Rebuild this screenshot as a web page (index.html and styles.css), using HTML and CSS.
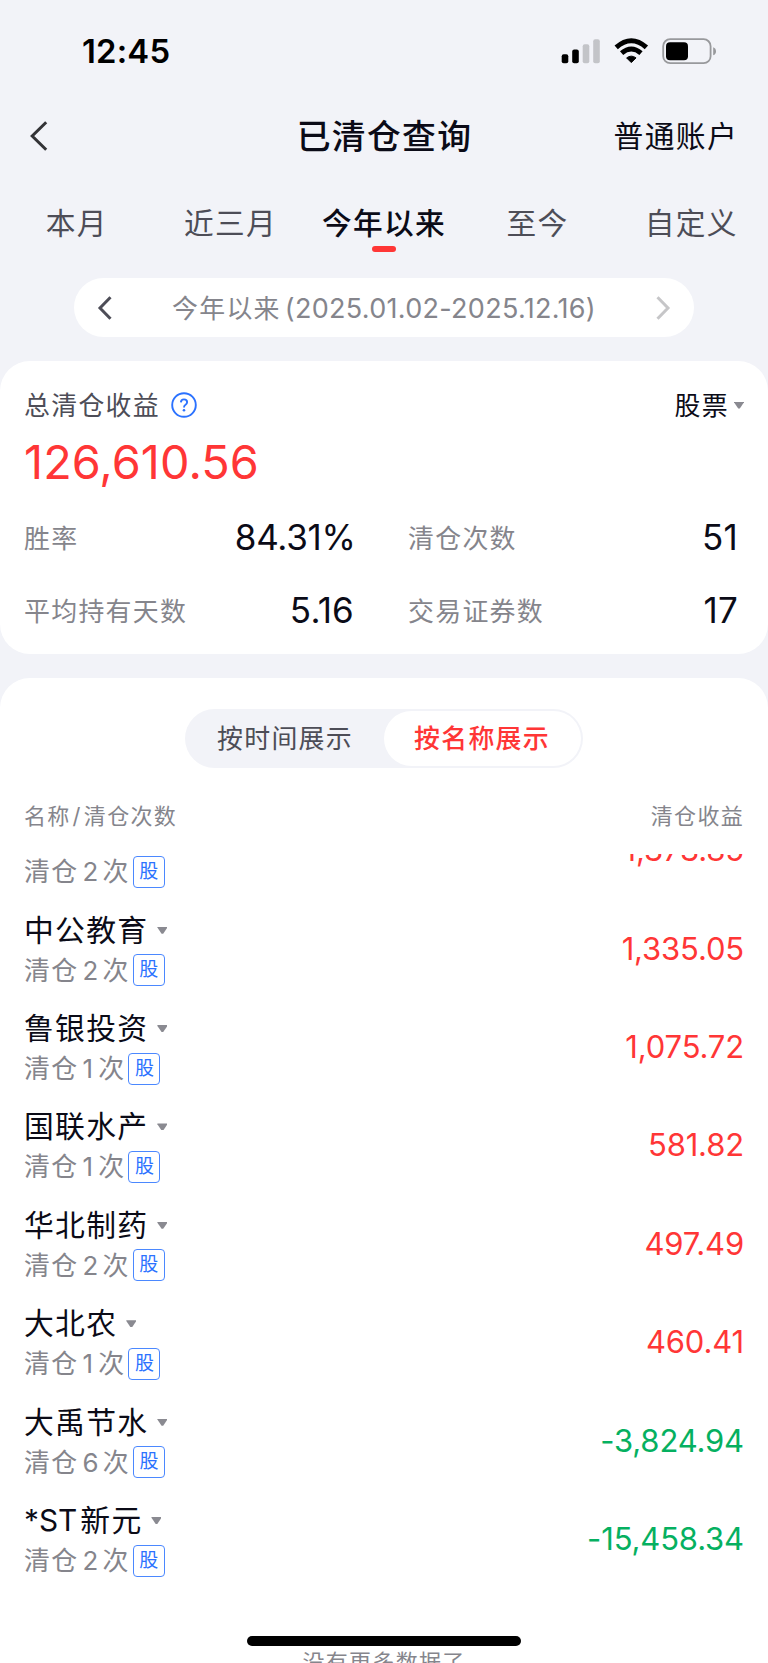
FILE: index.html
```html
<!DOCTYPE html>
<html lang="zh-CN">
<head>
<meta charset="utf-8">
<title>已清仓查询</title>
<link rel="stylesheet" href="styles.css">
</head>
<body>
<div class="screen">
  <header class="status">
    <span class="clock">12:45</span>
    <svg class="status-icons" width="156" height="28" viewBox="0 0 156 28">
      <rect x="1.7" y="16.2" width="6.6" height="9" rx="2"/>
      <rect x="12.2" y="11.4" width="6.6" height="13.8" rx="2"/>
      <rect class="dim" x="22.7" y="6.2" width="6.6" height="19" rx="2"/>
      <rect class="dim" x="33.2" y="1.2" width="6.6" height="24" rx="2"/>
      <path d="M71.3 24.6 L66.6 19.9 Q71.3 16.4 76 19.9 Z" stroke="#000" stroke-width="1" stroke-linejoin="round"/>
      <path class="wave" d="M61.6 15.1 Q71.3 6.9 81 15.1"/>
      <path class="wave" d="M56.2 9.4 Q71.3 -3.9 86.4 9.4"/>
      <rect class="shell" x="103.2" y="1.2" width="47.4" height="24" rx="7"/>
      <rect x="106" y="4.2" width="22" height="18" rx="4"/>
      <path class="nub" d="M153.2 9.2 Q156 10.2 156 13.2 Q156 16.2 153.2 17.2 Z"/>
    </svg>
  </header>

  <nav class="navbar">
    <svg class="back" width="20" height="32" viewBox="0 0 20 32"><path d="M17.2 2.2 L3.2 16 L17.2 29.8"/></svg>
    <h1 class="title">已清仓查询</h1>
    <span class="account">普通账户</span>
  </nav>

  <div class="tabs">
    <span class="tab">本月</span>
    <span class="tab">近三月</span>
    <span class="tab active">今年以来</span>
    <span class="tab">至今</span>
    <span class="tab">自定义</span>
  </div>

  <div class="range">
    <svg class="prev" width="16" height="26" viewBox="0 0 16 26"><path d="M13.5 2.2 L3 13 L13.5 23.8"/></svg>
    <span class="range-text">今年以来<span class="dates">(2025.01.02-2025.12.16)</span></span>
    <svg class="next" width="16" height="26" viewBox="0 0 16 26"><path d="M2.5 2.2 L13 13 L2.5 23.8"/></svg>
  </div>

  <section class="summary">
    <div class="summary-head">
      <span class="label-dark">总清仓收益</span>
      <svg class="help" width="26" height="26" viewBox="0 0 26 26"><circle cx="13" cy="13" r="11.8"/><path d="M9.9 10.4 Q10 7.4 13 7.4 Q16.1 7.4 16.1 10.2 Q16.1 11.6 14.5 12.7 Q13 13.6 13 15.4"/><circle class="dot" cx="13" cy="18.2" r="1.3"/></svg>
      <span class="kind">股票</span><i class="caret"></i>
    </div>
    <div class="total">126,610.56</div>
    <div class="metrics">
      <div class="metric"><span class="label">胜率</span><b class="num percent">84.31%</b></div>
      <div class="metric"><span class="label">清仓次数</span><b class="num">51</b></div>
      <div class="metric"><span class="label">平均持有天数</span><b class="num">5.16</b></div>
      <div class="metric"><span class="label">交易证券数</span><b class="num">17</b></div>
    </div>
  </section>

  <section class="detail">
    <div class="segment">
      <span class="seg">按时间展示</span>
      <span class="seg on">按名称展示</span>
    </div>
    <div class="cols"><span>名称<span class="slash">/</span>清仓次数</span><span>清仓收益</span></div>
    <div class="viewport">
      <div class="list">
        <div class="row"><div class="info"><div class="name"></div><div class="sub">清仓<span class="n">2</span>次<span class="badge">股</span></div></div><span class="amount">1,373.85</span></div>
        <div class="row"><div class="info"><div class="name">中公教育<i class="caret"></i></div><div class="sub">清仓<span class="n">2</span>次<span class="badge">股</span></div></div><span class="amount">1,335.05</span></div>
        <div class="row"><div class="info"><div class="name">鲁银投资<i class="caret"></i></div><div class="sub">清仓<span class="n one">1</span>次<span class="badge">股</span></div></div><span class="amount">1,075.72</span></div>
        <div class="row"><div class="info"><div class="name">国联水产<i class="caret"></i></div><div class="sub">清仓<span class="n one">1</span>次<span class="badge">股</span></div></div><span class="amount">581.82</span></div>
        <div class="row"><div class="info"><div class="name">华北制药<i class="caret"></i></div><div class="sub">清仓<span class="n">2</span>次<span class="badge">股</span></div></div><span class="amount">497.49</span></div>
        <div class="row"><div class="info"><div class="name">大北农<i class="caret"></i></div><div class="sub">清仓<span class="n one">1</span>次<span class="badge">股</span></div></div><span class="amount">460.41</span></div>
        <div class="row"><div class="info"><div class="name">大禹节水<i class="caret"></i></div><div class="sub">清仓<span class="n">6</span>次<span class="badge">股</span></div></div><span class="amount down">-3,824.94</span></div>
        <div class="row"><div class="info"><div class="name"><span class="latin">*ST</span>新元<i class="caret"></i></div><div class="sub">清仓<span class="n">2</span>次<span class="badge">股</span></div></div><span class="amount down">-15,458.34</span></div>
      </div>
      <div class="end">没有更多数据了</div>
    </div>
  </section>
  <div class="home-bar"></div>
</div>
</body>
</html>
```
FILE: styles.css
```css
* { box-sizing: border-box; }
body { margin: 0; }
.screen {
  position: relative;
  width: 768px;
  height: 1663px;
  overflow: hidden;
  display: flex;
  flex-direction: column;
  background: #f2f3f8;
  color: #0b0b17;
  font-family: Inter, "Noto Sans CJK SC", sans-serif;
  font-size: 25.9px;
  letter-spacing: 1.3px;
  white-space: nowrap;
}
svg { display: block; flex: none; }

.status {
  height: 102px;
  padding: 0 52px 0 82px;
  display: flex;
  align-items: center;
  justify-content: space-between;
}
.clock { font-size: 32.8px; font-weight: 600; letter-spacing: 0.2px; color: #000; }
.status-icons { margin-top: 1px; }
.status-icons .dim { fill: #c3c4c8; }
.status-icons .wave { fill: none; stroke: #000; stroke-width: 5; }
.status-icons .shell { fill: none; stroke: #98999c; stroke-width: 1.8; }
.status-icons .nub { fill: #98999c; }

.navbar {
  height: 68px;
  padding: 0 30px 0 29px;
  display: grid;
  grid-template-columns: 1fr auto 1fr;
  align-items: center;
}
.back path, .prev path, .next path { fill: none; stroke: #333336; stroke-width: 3; }
.prev path { stroke: #4d4d57; }
.next path { stroke: #c6c6c8; }
.title { margin: 0 -1px 0 1px; padding-bottom: 4px; font-size: 33.8px; font-weight: 500; }
.account { justify-self: end; padding-bottom: 4px; font-size: 29.8px; }

.tabs {
  height: 108px;
  display: grid;
  grid-template-columns: repeat(5, 1fr);
  color: #4d4d57;
  font-size: 29.7px;
  line-height: 106px;
  text-align: center;
}
.active { color: #0b0b17; font-weight: 500; display: flex; flex-direction: column; align-items: center; }
.active::after { content: ""; width: 24px; height: 6px; margin-top: -30px; border-radius: 3px; background: #ff3636; }

.range {
  width: 620px;
  height: 59px;
  margin: 0 74px 24px;
  padding: 0 23px;
  display: flex;
  align-items: center;
  justify-content: space-between;
  border-radius: 30px;
  background: #fff;
  color: #85858c;
}
.range-text { padding-bottom: 2px; }
.dates { margin-left: 4px; font-size: 27px; letter-spacing: 0.3px; }

.summary {
  height: 293px;
  padding: 24px 24px 0;
  border-radius: 30px;
  background: #fff;
}
.summary-head { height: 40px; display: flex; align-items: center; color: #0b0b17; }
.label-dark, .kind { padding-bottom: 3px; }
.label-dark { color: #4d4d57; }
.help { margin-left: 11px; }
.help circle, .help path { fill: none; stroke: #2b72ff; stroke-width: 1.9; }
.help .dot { fill: #2b72ff; stroke: none; }
.kind { margin-left: auto; }
.caret { display: inline-block; width: 10px; height: 7px; background: #8a8a91; clip-path: polygon(0 0, 100% 0, 100% 12%, 58% 100%, 42% 100%, 0 12%); }
.kind + .caret { margin: 0 0 0 5px; }
.total { height: 60px; margin-top: 7px; line-height: 60px; font-size: 46.8px; letter-spacing: 0.1px; color: #ff3636; }
.metrics { margin-top: 9px; display: grid; grid-template-columns: 330px 330px; column-gap: 54px; }
.metric { height: 72.7px; display: flex; align-items: center; justify-content: space-between; }
.label { padding-bottom: 2px; color: #85858c; }
.num { font-size: 35px; font-weight: 400; letter-spacing: 0.2px; }
.percent { margin-right: -1.5px; letter-spacing: -0.3px; }

.detail {
  height: 985px;
  margin-top: 24px;
  padding: 31px 24px 0;
  display: flex;
  flex-direction: column;
  border-radius: 30px 30px 0 0;
  background: #fff;
}
.segment {
  width: 398px;
  height: 59px;
  margin-left: 161px;
  padding: 2px;
  display: grid;
  grid-template-columns: 1fr 1fr;
  border-radius: 30px;
  background: #f2f3f8;
  line-height: 55px;
  text-align: center;
  color: #4d4d57;
}
.seg { padding-right: 1px; }
.on { border-radius: 28px; background: #fff; color: #ff3636; font-weight: 500; }
.cols { height: 86px; display: flex; justify-content: space-between; font-size: 22px; line-height: 96px; color: #85858c; }
.slash { margin: 0 2px; }
.viewport { flex: 1; min-height: 0; overflow: hidden; }
.list { margin-top: -53.4px; }
.row { height: 98.4px; display: flex; align-items: center; justify-content: space-between; }
.info { padding-top: 2px; }
.name { height: 40px; padding-bottom: 1px; line-height: 39px; font-size: 29.8px; display: flex; align-items: center; }
.name .caret { margin-left: 9px; }
.latin { margin-right: 3px; letter-spacing: 0; }
.sub { height: 37px; padding-top: 2px; line-height: 35px; display: flex; align-items: center; color: #85858c; }
.n { margin: 0 3px 0 4px; }
.one { margin-right: 4px; }
.badge {
  width: 32px;
  height: 32px;
  margin-left: 3px;
  border: 1.5px solid #4b88ff;
  border-radius: 4px;
  font-size: 19px;
  line-height: 29px;
  letter-spacing: 0;
  text-align: center;
  color: #2b72ff;
}
.amount { font-size: 31px; letter-spacing: -0.15px; color: #ff3636; }
.down { color: #05b060; }
.end { margin-top: 56px; text-align: center; font-size: 22px; color: #85858c; }
.home-bar { position: absolute; left: 247px; top: 1636px; width: 274px; height: 10px; border-radius: 5px; background: #000; }
```
